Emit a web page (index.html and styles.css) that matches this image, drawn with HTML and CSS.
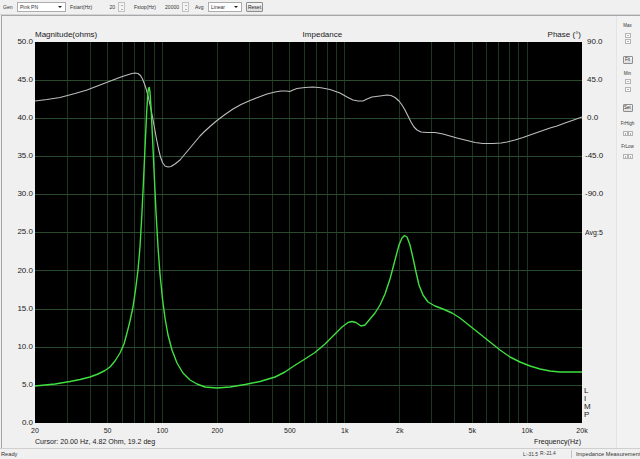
FILE: index.html
```html
<!DOCTYPE html>
<html lang="en">
<head>
<meta charset="utf-8">
<title>Impedance</title>
<link rel="stylesheet" href="styles.css">
</head>
<body>
<div class="app">
  <header class="toolbar">
    <span class="tlabel w-gen">Gen</span>
    <div class="combo w-combo1"><span class="combo-text">Pink PN</span><span class="combo-arrow"></span></div>
    <span class="tlabel w-fstart">Fstart(Hz)</span>
    <div class="spin w-spin1"><span class="spin-val">20</span><span class="spin-btns"><span class="sb up"></span><span class="sb down"></span></span></div>
    <span class="tlabel w-fstop">Fstop(Hz)</span>
    <div class="spin w-spin2"><span class="spin-val">20000</span><span class="spin-btns"><span class="sb up"></span><span class="sb down"></span></span></div>
    <span class="tlabel w-avg">Avg</span>
    <div class="combo w-combo2"><span class="combo-text">Linear</span><span class="combo-arrow"></span></div>
    <button class="tbtn w-reset">Reset</button>
  </header>

  <main class="main">
    <section class="chart">
      <div class="titles"><span>Magnitude(ohms)</span><span>Impedance</span><span>Phase (°)</span></div>

      <div class="ylabels">
        <span>50.0</span><span>45.0</span><span>40.0</span><span>35.0</span><span>30.0</span><span>25.0</span>
        <span>20.0</span><span>15.0</span><span>10.0</span><span>5.0</span><span>0.0</span>
      </div>

      <svg class="plot" width="547" height="381" viewBox="0 0 547 381" xmlns="http://www.w3.org/2000/svg">
        <rect x="0" y="0" width="547" height="381" fill="#000"/>
        <path class="vgrid" d="M32.5 0V381 M55.5 0V381 M72.5 0V381 M87.5 0V381 M99.5 0V381 M109.5 0V381 M119.5 0V381 M127.5 0V381
          M182.5 0V381 M214.5 0V381 M237.5 0V381 M254.5 0V381 M269.5 0V381 M281.5 0V381 M292.5 0V381 M301.5 0V381 M309.5 0V381
          M364.5 0V381 M396.5 0V381 M419.5 0V381 M437.5 0V381 M451.5 0V381 M463.5 0V381 M474.5 0V381 M483.5 0V381 M492.5 0V381"/>
        <path class="hgrid" d="M0 38.5H547 M0 76.5H547 M0 114.5H547 M0 152.5H547 M0 190.5H547 M0 228.5H547 M0 267.5H547 M0 305.5H547 M0 343.5H547"/>
        <polyline class="phase" points="0,59 12,57.5 25,55.5 40,51.5 52,48 65,43 78,38 86,35 92,33 97,31.5 100,31 103,31.5 105.5,33.5 107.5,37 109.5,42 111.5,48 113.5,56 115.5,65 117.5,75 119.5,86 121.5,97 123.5,107 125.5,115 127.5,120.5 130,124 133,125 136,124.5 140,122 145,118 150,112 155,106 160,100 165,94 170,89 175,84.5 182,78.5 190,72.5 198,67 206,62.5 215,58.5 224,55 232,52 240,50 246,49 251,49 255,49.5 258,48 262,46.5 270,45.5 278,45 286,45.8 295,47.5 305,51 312,55 318,58 323,59 328,59 332,57 337,55 345,54 352,53 356,53.5 360,55.5 364,59 367,63 370,68 373,74 376,80 379,85 382,88 386,90 392,90.5 400,90.5 408,92 415,94 422,96 432,98.5 440,100.5 448,101.5 458,101.5 466,101 472,100 480,98 488,95.5 495,93 505,89.5 515,86 522,84 530,81 540,77.5 547,75"/>
        <polyline class="mag" points="0,344 10,343 20,342 35,339.5 45,337.5 55,335 63,332 70,328.5 75,325 80,319 85,311 89,302 92,291 95,279 98,265 100.5,248 103,228 105,205 107,170 109,128 110.5,95 111.8,68 112.8,52 113.6,46 114.3,45.5 115,50 116,65 117.5,95 119,128 121,170 123,205 125,232 127.5,257 130,276 133,293 137,308 142,321 148,331 155,338 162,342 170,345 182,346 195,345 210,342.5 225,339.5 240,335 250,330 255,326.5 262,322 270,317 280,310.5 290,302 300,292 307,285 313,280.5 317,279.5 321,280.5 326,284 330,283 335,277 340,271 345,263 350,252 355,237 360,218 364,203 367,196 369.5,193.5 372,195 375,203 378,216 381,230 384,243 388,253 393,260 400,264 408,267 417,271 425,276 435,284 445,292 455,300 465,308 475,315 485,320 495,324 505,327 515,329 525,330 547,330"/>
      </svg>

      <div class="rlabels">
        <span class="rl">90.0</span>
        <span class="rl">45.0</span>
        <span class="rl">0.0</span>
        <span class="rl neg">-45.0</span>
        <span class="rl neg">-90.0</span>
        <span class="avg">Avg:5</span>
        <span class="limp">L<br>I<br>M<br>P</span>
      </div>

      <div class="xlabels">
        <span class="xl" style="left:0px">20</span>
        <span class="xl" style="left:72.6px">50</span>
        <span class="xl" style="left:127.4px">100</span>
        <span class="xl" style="left:182.3px">200</span>
        <span class="xl" style="left:254.9px">500</span>
        <span class="xl" style="left:309.8px">1k</span>
        <span class="xl" style="left:364.7px">2k</span>
        <span class="xl" style="left:437.2px">5k</span>
        <span class="xl" style="left:492.1px">10k</span>
        <span class="xl" style="left:547px">20k</span>
      </div>

      <div class="cursor-row"><span>Cursor: 20.00 Hz, 4.82 Ohm, 19.2 deg</span><span>Frequency(Hz)</span></div>
    </section>

    <aside class="side">
      <span class="slabel s-max">Max</span>
      <span class="sbtn sm up s-up1"></span>
      <span class="sbtn sm down s-down"></span>
      <button class="pbtn s-fit">Fit</button>
      <span class="slabel s-min">Min</span>
      <span class="sbtn sm up s-up2"></span>
      <span class="sbtn sm down s-down2"></span>
      <button class="pbtn s-set">Set</button>
      <span class="slabel s-frhigh">FrHigh</span>
      <div class="pair s-pair1"><span class="sbtn left"></span><span class="sbtn right"></span></div>
      <span class="slabel s-frlow">FrLow</span>
      <div class="pair s-pair2"><span class="sbtn left"></span><span class="sbtn right"></span></div>
    </aside>
  </main>

  <footer class="status">
    <span class="st-ready">Ready</span>
    <span class="st-l">L:-31.5</span>
    <span class="st-r">R:-21.4</span>
    <span class="st-mode">Impedance Measurement</span>
  </footer>
</div>
</body>
</html>
```

FILE: styles.css
```css
* { box-sizing: border-box; margin: 0; padding: 0; }

html, body {
  width: 640px;
  height: 459px;
  overflow: hidden;
  background: #f0f0f0;
}

body {
  font-family: "Liberation Sans", Arial, sans-serif;
  color: #1c1c1c;
}

.app {
  display: flex;
  flex-direction: column;
  width: 640px;
  height: 459px;
}

/* ---------- toolbar ---------- */
.toolbar {
  height: 15px;
  flex: 0 0 15px;
  display: flex;
  align-items: center;
  border-bottom: 1px solid #d6d6d6;
  font-size: 5px;
  color: #333;
  white-space: nowrap;
}

.tlabel { display: block; line-height: 10px; }
.w-gen { margin-left: 3px; width: 14px; }
.w-fstart { margin-left: 4px; width: 25px; }
.w-fstop { margin-left: 9px; width: 26px; }
.w-avg { margin-left: 6px; width: 13px; }

.combo {
  height: 10px;
  display: flex;
  align-items: center;
  background: #fff;
  border: 1px solid #acacac;
}
.w-combo1 { width: 49px; }
.w-combo2 { width: 34px; }
.combo-text { flex: 1; padding-left: 2px; line-height: 8px; }
.combo-arrow {
  width: 0;
  height: 0;
  margin-right: 3px;
  border-left: 2px solid transparent;
  border-right: 2px solid transparent;
  border-top: 2px solid #222;
}

.spin {
  height: 10px;
  display: flex;
  align-items: center;
}
.w-spin1 { width: 30px; }
.w-spin2 { width: 29px; }
.spin-val { flex: 1; text-align: right; padding-right: 3px; line-height: 10px; }
.spin-btns {
  width: 7px;
  height: 10px;
  display: flex;
  flex-direction: column;
  border: 1px solid #c2c2c2;
  background: #f3f3f3;
}
.sb {
  flex: 1;
  display: flex;
  align-items: center;
  justify-content: center;
}
.sb.up::after, .sbtn.up::after {
  content: "";
  border-left: 1.5px solid transparent;
  border-right: 1.5px solid transparent;
  border-bottom: 1.5px solid #777;
}
.sb.down::after, .sbtn.down::after {
  content: "";
  border-left: 1.5px solid transparent;
  border-right: 1.5px solid transparent;
  border-top: 1.5px solid #777;
}

.tbtn {
  margin-left: 4px;
  width: 17px;
  height: 10px;
  font-family: inherit;
  font-size: 5px;
  color: #222;
  border: 1px solid #8c8c8c;
  border-radius: 1px;
  background: linear-gradient(#f8f8f8, #dcdcdc);
  line-height: 8px;
}

/* ---------- main ---------- */
.main {
  height: 433px;
  flex: 0 0 433px;
  display: flex;
  margin-left: 1px;
  border-left: 1px solid #a4a4a4;
  border-top: 1px solid #a8a8a8;
}

.chart {
  display: grid;
  grid-template-columns: 33px 547px 34px;
  grid-template-rows: 26px 381px 14px 11px;
  width: 614px;
}

.titles {
  grid-column: 2;
  grid-row: 1;
  display: flex;
  justify-content: space-between;
  align-items: flex-end;
  padding-bottom: 2px;
  padding-right: 1px;
  font-size: 8px;
  line-height: 10px;
  color: #1a1a1a;
}

.ylabels {
  grid-column: 1;
  grid-row: 2;
  margin: -5px 0;
  display: flex;
  flex-direction: column;
  justify-content: space-between;
  text-align: right;
  padding-right: 2px;
  font-size: 8px;
  line-height: 10px;
  color: #222;
}

.plot {
  grid-column: 2;
  grid-row: 2;
  display: block;
}

.vgrid {
  stroke: #1d3620;
  stroke-width: 1;
  fill: none;
}

.hgrid {
  stroke: #2a4a2e;
  stroke-width: 1;
  fill: none;
}

.phase {
  fill: none;
  stroke: #bdbdbd;
  stroke-width: 1.1;
  stroke-linejoin: round;
}

.mag {
  fill: none;
  stroke: #3fe03f;
  stroke-width: 1.4;
  stroke-linejoin: round;
}

.rlabels {
  grid-column: 3;
  grid-row: 2;
  margin-top: -5px;
  display: flex;
  flex-direction: column;
  padding-left: 5px;
  font-size: 8px;
  color: #222;
}
.rl {
  height: 38.1px;
  flex: 0 0 38.1px;
  line-height: 10px;
}
.rl.neg { margin-left: -2px; }
.avg {
  padding-top: 1px;
  font-size: 7px;
  line-height: 10px;
  margin-left: -2px;
  color: #222;
}
.limp {
  margin-top: auto;
  margin-bottom: 4px;
  margin-left: -3px;
  font-size: 8px;
  line-height: 8px;
}

.xlabels {
  grid-column: 2;
  grid-row: 3;
  position: relative;
  font-size: 7px;
  line-height: 10px;
  color: #222;
}
.xl {
  position: absolute;
  top: 3px;
  transform: translateX(-50%);
  white-space: nowrap;
}

.cursor-row {
  grid-column: 2;
  grid-row: 4;
  display: flex;
  justify-content: space-between;
  align-items: center;
  padding-right: 1px;
  font-size: 7.1px;
  line-height: 11px;
  color: #1a1a1a;
}

/* ---------- side panel ---------- */
.side {
  flex: 1;
  display: flex;
  flex-direction: column;
  align-items: center;
  padding-right: 2px;
  border-left: 1px solid #e4e4e4;
  background: #f2f2f2;
  font-size: 4.5px;
  color: #333;
}

.slabel { line-height: 5px; display: block; }

.sbtn {
  display: flex;
  align-items: center;
  justify-content: center;
  border: 1px solid #b4b4b4;
  background: #f7f7f7;
}
.sbtn.sm { width: 6px; height: 5px; }

.pbtn {
  width: 10px;
  height: 8px;
  font-family: inherit;
  font-size: 4.5px;
  line-height: 6px;
  color: #222;
  border: 1px solid #8e8e8e;
  border-radius: 1px;
  background: linear-gradient(#f8f8f8, #dedede);
}

.pair { display: flex; }
.pair .sbtn { width: 5px; height: 5px; }
.sbtn.left::after {
  content: "";
  border-top: 1.2px solid transparent;
  border-bottom: 1.2px solid transparent;
  border-right: 1.2px solid #666;
}
.sbtn.right::after {
  content: "";
  border-top: 1.2px solid transparent;
  border-bottom: 1.2px solid transparent;
  border-left: 1.2px solid #666;
}

.s-max { margin-top: 7px; }
.s-up1 { margin-top: 5px; }
.s-down { margin-top: 1px; }
.s-fit { margin-top: 12px; }
.s-min { margin-top: 7px; }
.s-up2 { margin-top: 3px; }
.s-down2 { margin-top: 3px; }
.s-set { margin-top: 12px; }
.s-frhigh { margin-top: 9px; }
.s-pair1 { margin-top: 5px; }
.s-frlow { margin-top: 8px; }
.s-pair2 { margin-top: 5px; }

/* ---------- status bar ---------- */
.status {
  flex: 1;
  display: flex;
  align-items: center;
  border-top: 1px solid #cfcfcf;
  font-size: 5.7px;
  color: #333;
  white-space: nowrap;
  overflow: hidden;
}
.st-ready { flex: 0 0 523px; padding-left: 1px; }
.st-l { flex: 0 0 17px; font-size: 4.8px; }
.st-r { flex: 0 0 32px; font-size: 4.8px; border-right: 1px solid #c4c4c4; line-height: 8px; }
.st-mode { padding-left: 4px; }
```
